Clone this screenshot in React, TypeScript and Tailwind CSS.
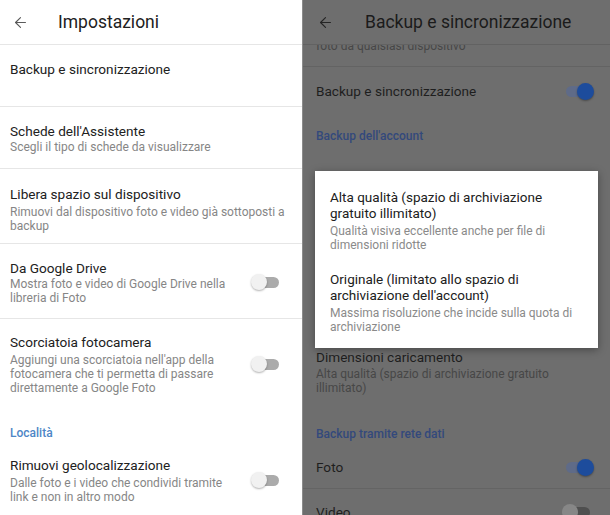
import React from "react"
import { ArrowLeft } from "lucide-react"

const font = { fontFamily: "Roboto, 'Noto Sans', sans-serif" }

function ToggleOff({ dim = false }: { dim?: boolean }) {
    return (
        <div className="relative w-[28px] h-[16px] shrink-0">
            <div className={`absolute right-0 top-[2.5px] w-[24px] h-[11px] rounded-full ${dim ? "bg-[#4f4f4f]" : "bg-[#ababab]"}`} />
            <div className={`absolute left-0 top-0 w-[16px] h-[16px] rounded-full ${dim ? "bg-[#878787]" : "bg-[#f1f1f1] shadow-[0_1px_2px_rgba(0,0,0,0.3)]"}`} />
        </div>
    )
}

function ToggleOn() {
    return (
        <div className="relative w-[28px] h-[17px] shrink-0">
            <div className="absolute left-0 top-[3px] w-[24px] h-[11px] rounded-full bg-[#5f6b88]" />
            <div className="absolute right-0 top-0 w-[17px] h-[17px] rounded-full bg-[#1d4c9c] shadow-[0_1px_2px_rgba(0,0,0,0.35)]" />
        </div>
    )
}

function LeftPanel() {
    const title = "text-[13.6px] leading-[18px] text-[#212121] whitespace-nowrap"
    const sub = "text-[12px] leading-[14px] text-[#868686] whitespace-nowrap"
    return (
        <div className="w-[303px] h-full bg-white border-r border-[#8c8c8c] shrink-0 overflow-hidden">
            <div className="h-[45px] flex items-center border-b border-[#e6e6e6]">
                <ArrowLeft size={17} strokeWidth={1.6} className="ml-[12px] text-[#5a5a5a]" />
                <h1 className="ml-[29px] text-[17.5px] text-[#212121]">Impostazioni</h1>
            </div>

            <div className="px-[10px] pt-[15px] pb-[28px] border-b border-[#e6e6e6]">
                <p className={title}>Backup e sincronizzazione</p>
            </div>

            <div className="px-[10px] pt-[15px] pb-[14px] border-b border-[#e6e6e6]">
                <p className={title}>Schede dell'Assistente</p>
                <p className={sub}>Scegli il tipo di schede da visualizzare</p>
            </div>

            <div className="px-[10px] pt-[16px] pb-[10px] border-b border-[#e6e6e6]">
                <p className={title}>Libera spazio sul dispositivo</p>
                <p className={`${sub} mt-[2px]`}>Rimuovi dal dispositivo foto e video già sottoposti a<br />backup</p>
            </div>

            <div className="pl-[10px] pr-[23px] pt-[15px] pb-[13px] border-b border-[#e6e6e6] flex items-center justify-between">
                <div>
                    <p className={title}>Da Google Drive</p>
                    <p className={sub}>Mostra foto e video di Google Drive nella<br />libreria di Foto</p>
                </div>
                <ToggleOff />
            </div>

            <div className="pl-[10px] pr-[23px] pt-[14px] flex items-center justify-between">
                <div>
                    <p className={title}>Scorciatoia fotocamera</p>
                    <p className={`${sub} mt-[2px]`}>Aggiungi una scorciatoia nell'app della<br />fotocamera che ti permetta di passare<br />direttamente a Google Foto</p>
                </div>
                <ToggleOff />
            </div>

            <p className="px-[10px] mt-[31px] text-[12px] leading-[14px] font-medium text-[#4d86c6]">Località</p>

            <div className="pl-[10px] pr-[23px] pt-[16px] flex items-center justify-between">
                <div>
                    <p className={title}>Rimuovi geolocalizzazione</p>
                    <p className={`${sub} mt-[2px]`}>Dalle foto e i video che condividi tramite<br />link e non in altro modo</p>
                </div>
                <ToggleOff />
            </div>
        </div>
    )
}

function RightPanel() {
    const title = "text-[13.6px] leading-[18px] text-[#1e1e1e] whitespace-nowrap"
    const sub = "text-[12px] leading-[14px] text-[#474747] whitespace-nowrap"
    const label = "text-[12px] leading-[14px] font-medium text-[#33497c]"
    return (
        <div className="relative flex-1 h-full bg-[#6e6e6e] flex flex-col overflow-hidden">
            <div className="h-[45px] shrink-0 flex items-center border-b border-[#626262]">
                <ArrowLeft size={17} strokeWidth={1.6} className="ml-[14px] text-[#252525]" />
                <h1 className="ml-[31px] text-[17.5px] text-[#1b1b1b]">Backup e sincronizzazione</h1>
            </div>

            <div className="flex-1 overflow-hidden">
                <div className="px-[13px] -mt-[6px] pb-[13px] border-b border-[#636363]">
                    <p className={sub}>foto da qualsiasi dispositivo</p>
                </div>

                <div className="pl-[13px] pr-[16px] pt-[15px] flex items-center justify-between">
                    <p className={title}>Backup e sincronizzazione</p>
                    <ToggleOn />
                </div>

                <p className={`px-[13px] mt-[29px] ${label}`}>Backup dell'account</p>

                <div className="h-[205px]" />

                <div className="px-[13px]">
                    <p className={title}>Dimensioni caricamento</p>
                    <p className={`${sub} mt-[1px]`}>Alta qualità (spazio di archiviazione gratuito<br />illimitato)</p>
                </div>

                <p className={`px-[13px] mt-[32px] ${label}`}>Backup tramite rete dati</p>

                <div className="pl-[13px] pr-[16px] pt-[17px] pb-[12px] border-b border-[#646464] flex items-center justify-between">
                    <p className={title}>Foto</p>
                    <ToggleOn />
                </div>

                <div className="pl-[13px] pr-[20px] pt-[14px] flex items-center justify-between">
                    <p className={title}>Video</p>
                    <ToggleOff dim />
                </div>
            </div>

            <div className="absolute left-[12px] right-[12px] top-[171px] h-[177px] bg-white shadow-[0_2px_8px_rgba(0,0,0,0.35)] px-[15px] pt-[18px]">
                <p className="text-[13.5px] leading-[16px] text-[#202020] whitespace-nowrap">Alta qualità (spazio di archiviazione<br />gratuito illimitato)</p>
                <p className="mt-[3px] text-[12px] leading-[14px] text-[#8a8a8a] whitespace-nowrap">Qualità visiva eccellente anche per file di<br />dimensioni ridotte</p>

                <p className="mt-[19px] text-[13.5px] leading-[16px] text-[#202020] whitespace-nowrap">Originale (limitato allo spazio di<br />archiviazione dell'account)</p>
                <p className="mt-[3px] text-[12px] leading-[14px] text-[#8a8a8a] whitespace-nowrap">Massima risoluzione che incide sulla quota di<br />archiviazione</p>
            </div>
        </div>
    )
}

export default function App() {
    return (
        <div style={font} className="w-[610px] h-[515px] flex overflow-hidden bg-white">
            <LeftPanel />
            <RightPanel />
        </div>
    )
}
